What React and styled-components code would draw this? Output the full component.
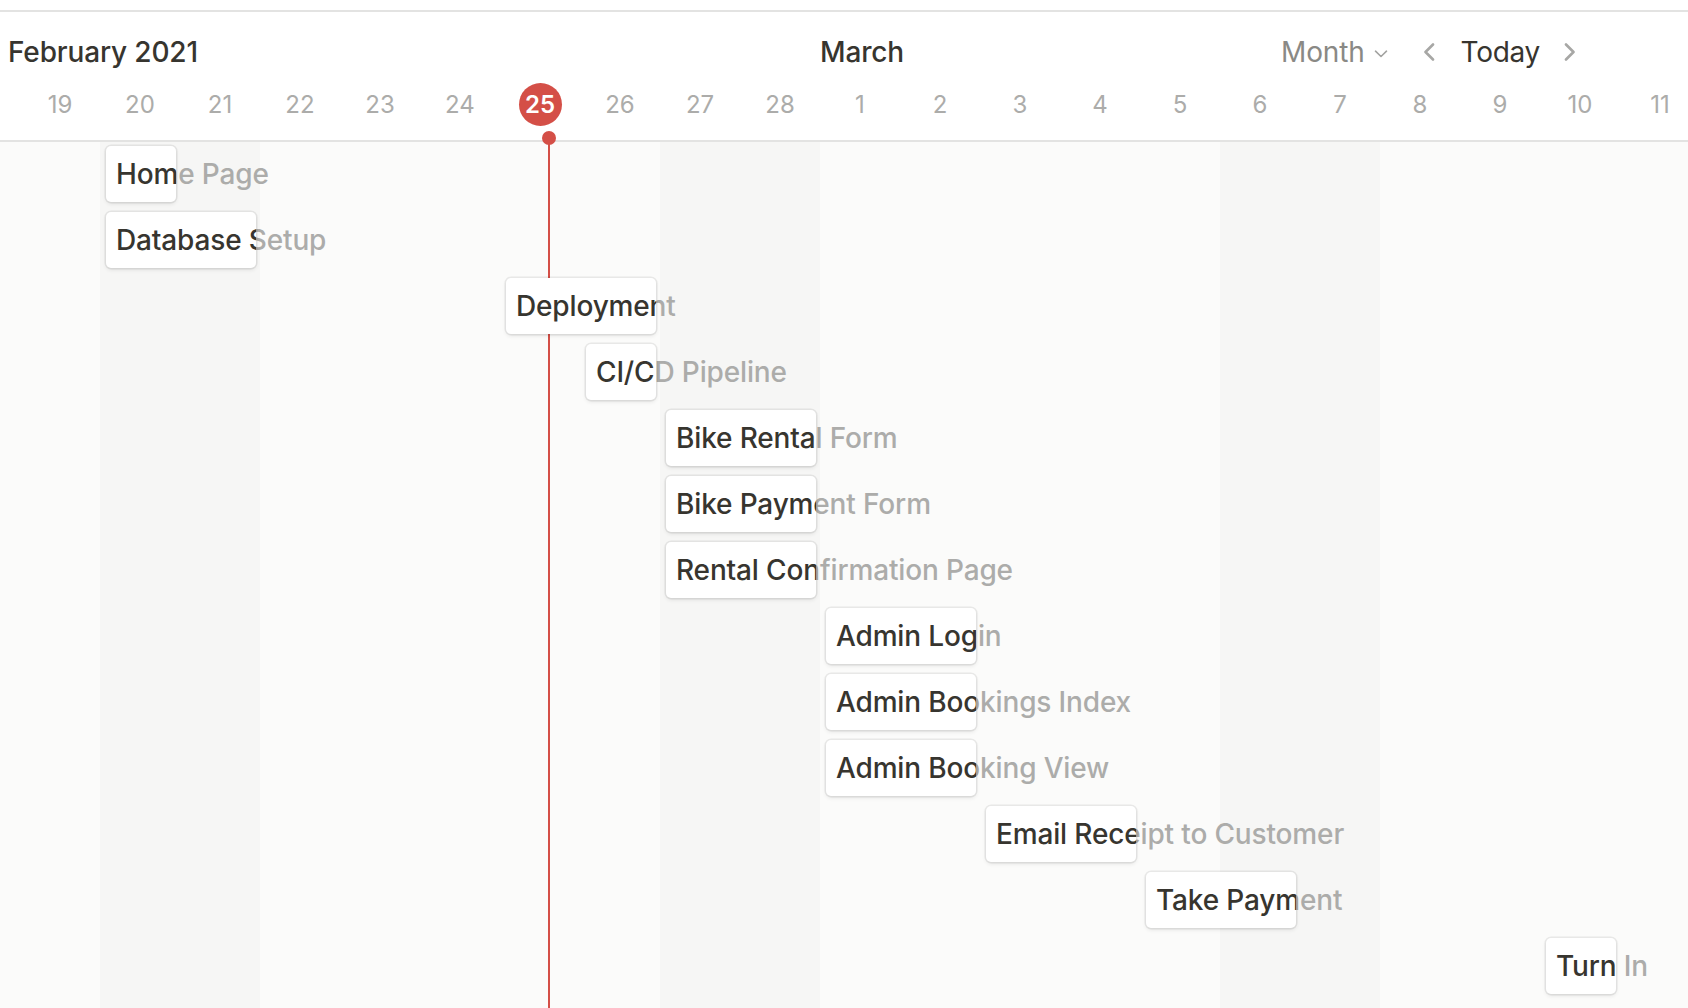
import React from "react";
import styled, { createGlobalStyle } from "styled-components";

const GlobalStyle = createGlobalStyle`
  html, body { margin: 0; padding: 0; background: #ffffff; }
  body { font-family: "Inter", "Liberation Sans", sans-serif; overflow: hidden; }
  * { box-sizing: border-box; }
`;

const COLS = "20px repeat(21, 80px)";

const Page = styled.div`
  width: 1688px;
  height: 1008px;
  overflow: hidden;
  display: flex;
  flex-direction: column;
  background: #ffffff;
`;

const TopStrip = styled.div`
  height: 12px;
  flex: none;
  border-bottom: 2px solid #e3e3e2;
`;

const Header = styled.div`
  flex: none;
  height: 130px;
  display: flex;
  flex-direction: column;
  padding-top: 20px;
  border-bottom: 2px solid #e3e3e2;
  background: #fff;
`;

const TitleRow = styled.div`
  display: grid;
  grid-template-columns: ${COLS};
  height: 40px;
  align-items: center;
  width: 1700px;
`;

const MonthTitle = styled.div`
  grid-column: ${(p) => p.$col};
  margin-left: ${(p) => p.$offset || 0}px;
  font-size: 28px;
  font-weight: 500;
  letter-spacing: -0.15px;
  color: #37352f;
  white-space: nowrap;
  line-height: 40px;
`;

const Controls = styled.div`
  grid-column: 17 / -1;
  margin-left: 61px;
  display: flex;
  align-items: center;
  height: 40px;
`;

const ViewSelect = styled.div`
  display: flex;
  align-items: center;
  gap: 9px;
  font-size: 28px;
  letter-spacing: -0.15px;
  color: #8a8985;
  margin-right: 35px;
`;

const NavButton = styled.div`
  display: flex;
  align-items: center;
  justify-content: center;
  width: 12px;
  height: 40px;
  margin-right: ${(p) => p.$mr || 0}px;
`;

const TodayLabel = styled.div`
  font-size: 28px;
  letter-spacing: -0.3px;
  color: #37352f;
  margin-right: 24px;
`;

const DayRow = styled.div`
  display: grid;
  grid-template-columns: ${COLS};
  height: 44px;
  margin-top: 10px;
  align-items: center;
  width: 1700px;
`;

const DayNum = styled.div`
  grid-column: ${(p) => p.$col};
  justify-self: center;
  display: flex;
  align-items: center;
  justify-content: center;
  width: 43px;
  height: 43px;
  border-radius: 50%;
  font-size: 24px;
  font-weight: ${(p) => (p.$today ? 600 : 400)};
  color: ${(p) => (p.$today ? "#ffffff" : "#acacaa")};
  background: ${(p) => (p.$today ? "#d44f47" : "transparent")};
`;

const Body = styled.div`
  flex: 1;
  display: grid;
  grid-template-columns: ${COLS};
  grid-template-rows: repeat(13, 66px) 1fr;
  width: 1700px;
  background: #fbfbfa;
`;

const WeekendCol = styled.div`
  grid-column: ${(p) => p.$col};
  grid-row: 1 / -1;
  background: #f6f6f5;
`;

const TodayTrack = styled.div`
  grid-column: ${(p) => p.$col};
  grid-row: 1 / -1;
  position: relative;
  z-index: 1;
`;

const TodayLine = styled.div`
  position: absolute;
  left: ${(p) => p.$x}px;
  top: 0;
  bottom: 0;
  width: 2px;
  background: #d44f47;
`;

const TodayDot = styled.div`
  position: absolute;
  left: ${(p) => p.$x - 6}px;
  top: -11px;
  width: 14px;
  height: 14px;
  border-radius: 50%;
  background: #d44f47;
`;

const Ghost = styled.div`
  grid-column: ${(p) => p.$col} / span ${(p) => p.$span};
  grid-row: ${(p) => p.$row};
  align-self: start;
  margin: 4px 0 0 16px;
  line-height: 56px;
  font-size: 28px;
  font-weight: 500;
  letter-spacing: -0.15px;
  color: #acacaa;
  white-space: nowrap;
  position: relative;
  z-index: 2;
`;

const Card = styled.div`
  grid-column: ${(p) => p.$col} / span ${(p) => p.$span};
  grid-row: ${(p) => p.$row};
  align-self: start;
  margin: 4px 4px 0 6px;
  height: 56px;
  background: #ffffff;
  border-radius: 5px;
  box-shadow: 0 0 0 1.5px rgba(15, 15, 15, 0.07), 0 2px 4px rgba(15, 15, 15, 0.09);
  overflow: hidden;
  padding-left: 10px;
  line-height: 56px;
  font-size: 28px;
  font-weight: 500;
  letter-spacing: -0.15px;
  color: #37352f;
  white-space: nowrap;
  position: relative;
  z-index: 3;
`;

const days = [
  "19", "20", "21", "22", "23", "24", "25", "26", "27", "28",
  "1", "2", "3", "4", "5", "6", "7", "8", "9", "10", "11",
];
const TODAY = 6;
const weekends = [1, 2, 8, 9, 15, 16];

const tasks = [
  ["Home Page", 1, 1],
  ["Database Setup", 1, 2],
  ["Deployment", 6, 2],
  ["CI/CD Pipeline", 7, 1],
  ["Bike Rental Form", 8, 2],
  ["Bike Payment Form", 8, 2],
  ["Rental Confirmation Page", 8, 2],
  ["Admin Login", 10, 2],
  ["Admin Bookings Index", 10, 2],
  ["Admin Booking View", 10, 2],
  ["Email Receipt to Customer", 12, 2],
  ["Take Payment", 14, 2],
  ["Turn In", 19, 1],
];

const ChevronLeft = () => (
  <svg width="12" height="18" viewBox="0 0 12 18" fill="none">
    <path d="M10 1.5 L2.5 9 L10 16.5" stroke="#a7a7a5" strokeWidth="2.6" strokeLinecap="round" strokeLinejoin="round" />
  </svg>
);

const ChevronRight = () => (
  <svg width="12" height="18" viewBox="0 0 12 18" fill="none">
    <path d="M2 1.5 L9.5 9 L2 16.5" stroke="#a7a7a5" strokeWidth="2.6" strokeLinecap="round" strokeLinejoin="round" />
  </svg>
);

const ChevronDown = () => (
  <svg width="14" height="8" viewBox="0 0 14 8" fill="none" style={{ marginTop: 4 }}>
    <path d="M1.5 1.2 L7 6.5 L12.5 1.2" stroke="#a3a3a1" strokeWidth="1.6" strokeLinecap="round" strokeLinejoin="round" />
  </svg>
);

export default function App() {
  return (
    <>
      <GlobalStyle />
      <Page>
        <TopStrip />
        <Header>
          <TitleRow>
            <MonthTitle $col="1 / span 6" $offset={8}>February 2021</MonthTitle>
            <MonthTitle $col="12 / span 3">March</MonthTitle>
            <Controls>
              <ViewSelect>
                Month
                <ChevronDown />
              </ViewSelect>
              <NavButton $mr={26}>
                <ChevronLeft />
              </NavButton>
              <TodayLabel>Today</TodayLabel>
              <NavButton>
                <ChevronRight />
              </NavButton>
            </Controls>
          </TitleRow>
          <DayRow>
            {days.map((d, i) => (
              <DayNum key={i} $col={i + 2} $today={i === TODAY}>
                {d}
              </DayNum>
            ))}
          </DayRow>
        </Header>
        <Body>
          {weekends.map((w) => (
            <WeekendCol key={w} $col={w + 2} />
          ))}
          <TodayTrack $col={TODAY + 2}>
            <TodayDot $x={48} />
            <TodayLine $x={48} />
          </TodayTrack>
          {tasks.map(([name, start, span], r) => (
            <React.Fragment key={name}>
              <Ghost $col={start + 2} $span={span} $row={r + 1}>
                {name}
              </Ghost>
              <Card $col={start + 2} $span={span} $row={r + 1}>
                {name}
              </Card>
            </React.Fragment>
          ))}
        </Body>
      </Page>
    </>
  );
}
